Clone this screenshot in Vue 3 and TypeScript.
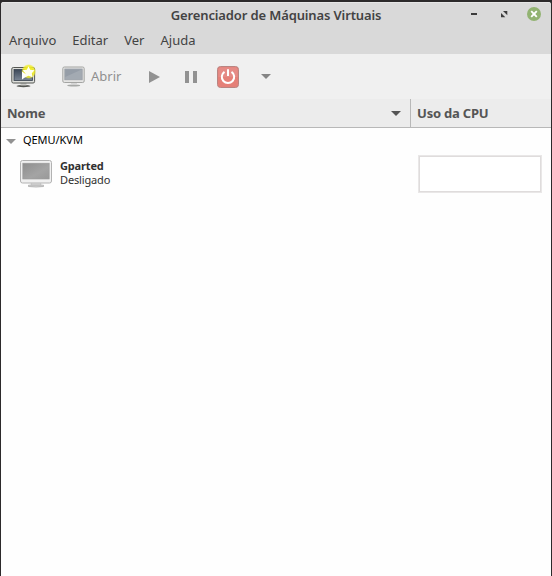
<script setup lang="ts">
const menus: string[] = ['Arquivo', 'Editar', 'Ver', 'Ajuda']
const connection = 'QEMU/KVM'
const machines: { name: string; state: string }[] = [{ name: 'Gparted', state: 'Desligado' }]
</script>

<template>
  <div class="desktop">
    <main class="window">
      <header class="titlebar">
        <h1 class="title">Gerenciador de Máquinas Virtuais</h1>
        <div class="controls">
          <svg width="14" height="14" viewBox="0 0 14 14"><path d="M4 6h6v2H4z" fill="#3c3c3c" /></svg>
          <svg width="14" height="14" viewBox="0 0 14 14"><path d="M6 4h4.300v4.300zM4 6v4.300h4.300z" fill="#3c3c3c" /></svg>
          <svg width="14" height="14" viewBox="0 0 14 14">
            <circle cx="7" cy="7" r="7" fill="#92b372" />
            <path d="M4.200 4.200l5.600 5.600m0-5.600l-5.600 5.600" stroke="#fff" stroke-width="1.9" />
          </svg>
        </div>
      </header>
      <nav class="menubar">
        <span v-for="menu in menus" :key="menu" class="menu">{{ menu }}</span>
      </nav>
      <div class="toolbar">
        <svg class="new" width="26" height="24" viewBox="0 0 26 24">
          <defs>
            <linearGradient id="screen" x1="0" y1="0" x2="0" y2="1">
              <stop offset="0" stop-color="#3c4857" /><stop offset="1" stop-color="#7b8796" />
            </linearGradient>
            <radialGradient id="glow">
              <stop offset=".5" stop-color="#f2ee20" /><stop offset=".8" stop-color="#f0ec30" stop-opacity=".8" /><stop offset="1" stop-color="#f0ec40" stop-opacity="0" />
            </radialGradient>
          </defs>
          <ellipse cx="12.500" cy="22" rx="7" ry="1.200" fill="#555753" />
          <path d="M9.500 19h6v2.500h-6z" fill="#c9cac6" />
          <rect x=".8" y="3.500" width="22.800" height="15.500" rx="1.500" fill="#dedfdb" stroke="#555753" />
          <rect x="3" y="5.500" width="18.500" height="11" fill="url(#screen)" stroke="#37414e" stroke-width=".8" />
          <circle cx="17.700" cy="7.500" r="7.500" fill="url(#glow)" />
          <path d="M11 7.500v8l5.500-4z" fill="#fff" />
          <path d="M17.500 2.200l1.700 3.500 4.300.5-2.700 3 .8 4-4.100-1.500-4 1.700.9-4.200-2.800-2.900 4.200-.5z" fill="#fffff0" />
        </svg>
        <div class="open">
          <svg width="24" height="22" viewBox="0 0 24 22">
            <ellipse cx="11.700" cy="19.500" rx="6.500" ry="1" fill="#a6a8a6" />
            <path d="M9 16h6v2.500H9z" fill="#d6d6d6" />
            <rect x=".8" y="1" width="21.400" height="15.500" rx="1.500" fill="#e4e4e3" stroke="#a4a5a3" />
            <rect x="2.800" y="3" width="17.400" height="10.800" fill="#a3aab2" stroke="#979da4" stroke-width=".7" />
            <path d="M3.200 3.400h16.500L3.200 11z" fill="#959da7" />
          </svg>
          <span class="open-label">Abrir</span>
        </div>
        <svg class="play" width="11" height="12" viewBox="0 0 11 12"><path d="M0 0l11 6-11 6z" fill="#929292" /></svg>
        <svg class="pause" width="12" height="12" viewBox="0 0 12 12"><path d="M0 0h4v12H0zM8 0h4v12H8z" fill="#929292" /></svg>
        <svg class="power" width="22" height="22" viewBox="0 0 22 22">
          <rect x=".5" y=".5" width="21" height="21" rx="3" fill="#e58078" stroke="#b98582" />
          <path d="M1.500 11V3.500q0-2 2-2h15q2 0 2 2V11z" fill="#e58b86" />
          <path d="M7.500 5.800a6.200 6.200 0 1 0 7 0" fill="none" stroke="#fff" stroke-width="2" />
          <path d="M11 3.200v6.900" stroke="#fff" stroke-width="2" />
        </svg>
        <svg class="more" width="10" height="5" viewBox="0 0 10 5"><path d="M0 0h10L5 5z" fill="#858585" /></svg>
      </div>
      <div class="columns">
        <div class="column name-column">
          <span class="label-name">Nome</span>
          <svg width="10" height="5" viewBox="0 0 10 5"><path d="M0 0h10L5 5z" fill="#555" /></svg>
        </div>
        <div class="column cpu-column"><span class="label-cpu">Uso da CPU</span></div>
      </div>
      <section class="list">
        <div class="connection">
          <svg width="10" height="5" viewBox="0 0 10 5"><path d="M0 0h10L5 5z" fill="#929292" /></svg>
          <span class="connection-name">{{ connection }}</span>
        </div>
        <div v-for="machine in machines" :key="machine.name" class="machine">
          <svg width="32" height="28" viewBox="0 0 32 28">
            <defs>
              <linearGradient id="off" x1="0" y1="0" x2="1" y2="1">
                <stop offset="0" stop-color="#8e8e8e" /><stop offset=".6" stop-color="#a4a4a4" /><stop offset="1" stop-color="#999" />
              </linearGradient>
            </defs>
            <path d="M11.500 22h9l.5 3H11z" fill="#e3e3e3" stroke="#bbb" stroke-width=".6" />
            <path d="M8.500 25.200h15v1.300q-7.500 1-15 0z" fill="#d9d9d9" stroke="#aaa" stroke-width=".8" />
            <rect x=".5" y=".5" width="31" height="22.500" rx="2" fill="#f0f0f0" stroke="#b2b2b2" />
            <rect x="2.800" y="3.200" width="26.400" height="15.800" fill="url(#off)" stroke="#9a9a9a" stroke-width=".6" />
          </svg>
          <div class="info">
            <span class="machine-name">{{ machine.name }}</span>
            <span class="machine-state">{{ machine.state }}</span>
          </div>
          <div class="graph"></div>
        </div>
      </section>
    </main>
  </div>
</template>

<style>
body { margin: 0; background: #2c2a2b; }
</style>
<style scoped>
.desktop { box-sizing: border-box; width: 552px; height: 576px; padding: 2px 1px 0; background: #2c2a2b; font-family: "Noto Sans", "Open Sans", sans-serif; font-size: 13px; white-space: nowrap; overflow: hidden; }
.window { height: 574px; background: #fefefe; border-radius: 3px 3px 0 0; overflow: hidden; display: flex; flex-direction: column; }
.desktop svg { display: block; flex: none; }
.titlebar { box-sizing: border-box; height: 26px; background: #d9d9d9; border-top: 1px solid #e6e6e6; display: grid; grid-template-columns: 1fr auto 1fr; }
.title { grid-column: 2; margin: 0; font-size: 13px; line-height: 25px; font-weight: 600; letter-spacing: -.13px; color: #434343; }
.controls { display: flex; gap: 16px; justify-content: flex-end; padding: 4px 10px 0 0; }
.menubar { height: 26px; background: #d9d9d9; display: flex; gap: 16px; padding-left: 8px; line-height: 25px; color: #434343; }
.toolbar { height: 45px; background: #f0f0f0; display: flex; align-items: center; color: #8f8f8f; padding-left: 10px; }
.new { margin-top: -2px; }
.open { display: flex; align-items: center; margin-left: 25px; width: 60px; gap: 5px; }
.open-label { line-height: 20px; padding-bottom: 2px; }
.play { margin-left: 27px; }
.pause { margin-left: 25px; }
.power { margin-left: 20px; }
.more { margin-left: 22px; }
.columns { box-sizing: border-box; height: 29px; background: #ececec; border-bottom: 1px solid #b8b8b8; display: flex; font-weight: 700; color: #555; }
.column { box-sizing: border-box; display: flex; align-items: center; padding-left: 6px; }
.name-column { width: 410px; justify-content: space-between; padding-right: 9px; border-right: 1px solid #b8b8b8; }
.label-name, .label-cpu { letter-spacing: -.2px; }
.list { font-size: 11px; color: #303030; }
.connection { display: flex; align-items: center; height: 26px; gap: 7px; padding-left: 5px; color: #000; }
.connection-name { padding-bottom: 3px; letter-spacing: -.05px; }
.machine { display: flex; align-items: flex-start; padding: 1px 9px 0 19px; }
.machine svg { margin-top: 5px; }
.info { display: flex; flex-direction: column; margin: 4px 0 0 8px; line-height: 14px; letter-spacing: -.15px; }
.machine-name { font-weight: 700; }
.graph { box-sizing: border-box; width: 124px; height: 38px; margin-left: auto; border: 1px solid #e9e7e7; background: #fff; box-shadow: inset 0 0 0 1px #dfdcdc; }
</style>
